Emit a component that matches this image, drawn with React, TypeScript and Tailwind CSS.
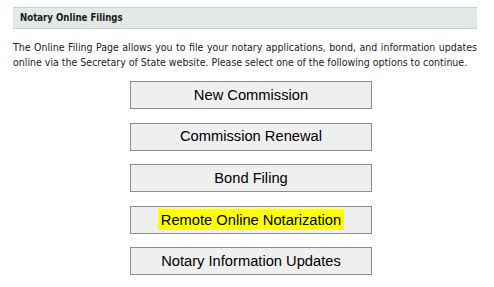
const OPTIONS = [
  { label: "New Commission" },
  { label: "Commission Renewal" },
  { label: "Bond Filing" },
  { label: "Remote Online Notarization", highlight: true },
  { label: "Notary Information Updates" },
];

export default function App() {
  return (
    <div className="h-[287px] w-[494px] overflow-hidden bg-white pl-[13px] pt-[7px]">
      <div className="w-[464px]">
        <div className="flex h-[22px] items-center border-y border-[#bfd2c9] bg-[#e3e9e6] pl-[7px] font-['DejaVu_Sans_Condensed',Tahoma,sans-serif] text-[9.6px] font-bold text-[#1a1a1a]">
          Notary Online Filings
        </div>
        <p className="mt-[11px] text-justify font-['DejaVu_Sans_Condensed',Tahoma,sans-serif] text-[10.5px] leading-[15px] text-[#222]">
          The Online Filing Page allows you to file your notary applications, bond, and information updates online via the
          Secretary of State website. Please select one of the following options to continue.
        </p>
        <div className="mt-[11px] flex flex-col gap-[13.5px] pl-[117px]">
          {OPTIONS.map((o) => (
            <button
              key={o.label}
              className="flex h-[28px] w-[242px] items-center justify-center border border-[#8c8c8c] bg-[#efefef] font-['Liberation_Sans',Arial,sans-serif] text-[14.7px] text-black"
            >
              {o.highlight ? <span className="bg-[#ffff00] px-[3px] py-[2.5px] leading-[16px]">{o.label}</span> : o.label}
            </button>
          ))}
        </div>
      </div>
    </div>
  );
}
